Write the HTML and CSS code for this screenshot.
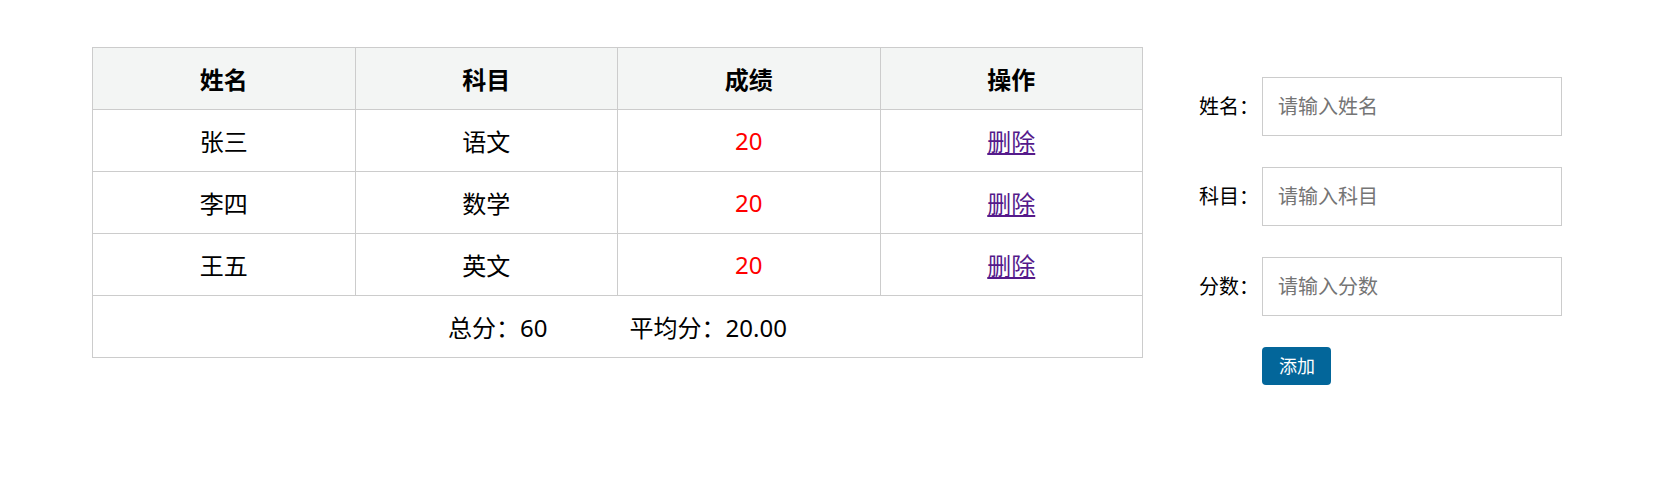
FILE: index.html
```html
<!DOCTYPE html>
<html lang="zh-CN">
<head>
<meta charset="utf-8">
<title>成绩管理</title>
<link rel="stylesheet" href="styles.css">
</head>
<body>
<div class="page">
  <table class="score-table">
    <thead>
      <tr>
        <th>姓名</th>
        <th>科目</th>
        <th>成绩</th>
        <th>操作</th>
      </tr>
    </thead>
    <tbody>
      <tr>
        <td>张三</td>
        <td>语文</td>
        <td class="score">20</td>
        <td><a href="#" class="del">删除</a></td>
      </tr>
      <tr>
        <td>李四</td>
        <td>数学</td>
        <td class="score">20</td>
        <td><a href="#" class="del">删除</a></td>
      </tr>
      <tr>
        <td>王五</td>
        <td>英文</td>
        <td class="score">20</td>
        <td><a href="#" class="del">删除</a></td>
      </tr>
      <tr>
        <td colspan="4"><span class="sum">总分：60</span><span class="avg">平均分：20.00</span></td>
      </tr>
    </tbody>
  </table>

  <form class="add-form">
    <label class="lbl" for="name">姓名：</label>
    <input class="field" id="name" type="text" placeholder="请输入姓名">
    <label class="lbl" for="subject">科目：</label>
    <input class="field" id="subject" type="text" placeholder="请输入科目">
    <label class="lbl" for="score">分数：</label>
    <input class="field" id="score" type="text" placeholder="请输入分数">
    <button class="btn" type="button">添加</button>
  </form>
</div>
</body>
</html>
```

FILE: styles.css
```css
html, body {
  margin: 0;
  padding: 0;
  background: #fff;
}

body {
  font-family: "Noto Sans", "Noto Sans CJK SC", sans-serif;
  color: #000;
}

.page {
  display: flex;
  align-items: flex-start;
  padding: 47px 0 0 92px;
  gap: 56px;
}

.score-table {
  width: 1051px;
  border-collapse: collapse;
  table-layout: fixed;
  font-size: 24px;
  text-align: center;
}

.score-table th,
.score-table td {
  border: 1px solid #cccccc;
  height: 61px;
  padding: 0;
  text-align: center;
  vertical-align: middle;
}

.score-table th {
  background: #f3f5f4;
  font-weight: bold;
}

.score {
  color: #ff0000;
}

.del {
  color: #551a8b;
  text-decoration: underline;
}

.avg {
  margin-left: 82px;
}

.add-form {
  display: grid;
  grid-template-columns: auto 300px;
  column-gap: 3px;
  row-gap: 31px;
  align-items: center;
  margin-top: 30px;
}

.lbl {
  font-size: 20px;
  line-height: 28px;
}

.field {
  box-sizing: border-box;
  width: 300px;
  height: 59px;
  border: 1px solid #cccccc;
  padding: 0 15px;
  font-family: "Noto Sans", "Noto Sans CJK SC", sans-serif;
  font-size: 20px;
  outline: none;
  background: #fff;
}

.field::placeholder {
  color: #757575;
}

.btn {
  grid-column: 2;
  justify-self: start;
  height: 38px;
  padding: 0 16px 0 17px;
  border: none;
  border-radius: 4px;
  background: #03669a;
  color: #fff;
  font-family: "Noto Sans", "Noto Sans CJK SC", sans-serif;
  font-size: 18px;
  line-height: 38px;
}
```
